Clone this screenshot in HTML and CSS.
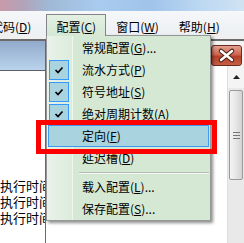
FILE: index.html
```html
<!DOCTYPE html>
<html lang="zh-CN">
<head>
    <meta charset="UTF-8">
    <meta name="viewport" content="width=device-width, initial-scale=1.0">
    <title>配置菜单</title>
    <link rel="stylesheet" href="styles.css">
</head>
<body>
    <div class="screen">
        <div class="titlebar"></div>

        <div class="menubar">
            <span class="menu-item first">代码(<u>D</u>)</span>
            <span class="menu-item open">配置(<u>C</u>)</span>
            <span class="menu-item">窗口(<u>W</u>)</span>
            <span class="menu-item">帮助(<u>H</u>)</span>
        </div>

        <div class="workspace">
            <div class="left-pane">
                <div class="pane-head"></div>
                <div class="pane-body">
                    <div class="log-line">执行时间：12 ms</div>
                    <div class="log-line">执行时间：15 ms</div>
                    <div class="log-line">执行时间：11 ms</div>
                </div>
            </div>

            <div class="child">
                <div class="child-head">
                    <div class="close-btn">
                        <svg width="29" height="19" viewBox="0 0 29 19">
                            <path d="M9 5 L20 14 M20 5 L9 14" stroke="#4a2418" stroke-width="4.5" stroke-linecap="round"/>
                            <path d="M9 5 L20 14 M20 5 L9 14" stroke="#fff" stroke-width="2.4" stroke-linecap="round"/>
                        </svg>
                    </div>
                </div>
                <div class="child-body">
                    <div class="doc"></div>
                    <div class="scrollbar">
                        <div class="scroll-up">
                            <svg width="7" height="4" viewBox="0 0 7 4"><path d="M0 4 L3.5 0 L7 4 Z" fill="#222"/></svg>
                        </div>
                        <div class="scroll-thumb">
                            <svg width="7" height="7" viewBox="0 0 7 7">
                                <path d="M0 0.5 H7 M0 3.5 H7 M0 6.5 H7" stroke="#777" stroke-width="1"/>
                            </svg>
                        </div>
                    </div>
                </div>
            </div>
        </div>

        <!-- open "配置" menu -->
        <div class="dropdown">
            <div class="item"><span class="check"></span><span class="label">常规配置(<u>G</u>)...</span></div>
            <div class="item"><span class="check on"></span><span class="label">流水方式(<u>P</u>)</span></div>
            <div class="item"><span class="check on"></span><span class="label">符号地址(<u>S</u>)</span></div>
            <div class="item"><span class="check on"></span><span class="label">绝对周期计数(<u>A</u>)</span></div>
            <div class="item hover"><span class="check"></span><span class="label">定向(<u>F</u>)</span></div>
            <div class="item"><span class="check"></span><span class="label">延迟槽(<u>D</u>)</span></div>
            <div class="sep"></div>
            <div class="item"><span class="check"></span><span class="label">载入配置(<u>L</u>)...</span></div>
            <div class="item"><span class="check"></span><span class="label">保存配置(<u>S</u>)...</span></div>
        </div>

        <div class="callout"></div>
    </div>
</body>
</html>
```

FILE: styles.css
```css
body {
    margin: 0;
    font-family: "Noto Sans CJK SC", "Noto Sans", sans-serif;
    font-size: 12px;
    color: #000;
    background-color: #fff;
}

.screen {
    position: relative;
    width: 244px;
    height: 243px;
    overflow: hidden;
}

.titlebar {
    height: 11px;
    background: linear-gradient(90deg, #c99aaa 0%, #b3a2b8 9%, #9fb9d6 20%, #a9cbee 40%, #a0c4ea 62%, #bcd8f2 82%, #cfe3f3 100%);
}

.menubar {
    display: flex;
    align-items: flex-start;
    height: 24px;
    padding-top: 3px;
    box-sizing: border-box;
    background: linear-gradient(#f5f7f9, #edf0f3);
}

.menu-item {
    flex-shrink: 0;
    height: 22px;
    padding: 2px 9px 0;
    line-height: 19px;
    border: 1px solid transparent;
    border-bottom: none;
    box-sizing: border-box;
    white-space: nowrap;
}

.menu-item.first {
    margin-left: -19px;
    padding-right: 14px;
}

.menu-item.open {
    position: relative;
    z-index: 2;
    border-color: #858585;
    background: linear-gradient(#e3f0e3, #d5e8d4);
}

.workspace {
    display: flex;
    height: 208px;
    padding-top: 4px;
    box-sizing: border-box;
    background-color: #f0f0f0;
}

.left-pane {
    display: flex;
    flex-direction: column;
    width: 46px;
    border-top: 2px solid #6b6b6b;
    border-right: 1px solid #6b6b6b;
    box-sizing: border-box;
}

.pane-head {
    flex-shrink: 0;
    height: 29px;
    background: linear-gradient(#92aacb, #bad3ec);
    border-bottom: 1px solid #5f5f5f;
}

.pane-body {
    flex: 1;
    padding-top: 107px;
    background-color: #fff;
    overflow: hidden;
}

.log-line {
    font-size: 13px;
    line-height: 16px;
    white-space: nowrap;
}

.child {
    flex: 1;
    display: flex;
    flex-direction: column;
    border-top: 2px solid #6b6b6b;
}

.child-head {
    flex-shrink: 0;
    display: flex;
    justify-content: flex-end;
    align-items: flex-end;
    height: 25px;
    padding-right: 2px;
    background-color: #f3f3f3;
}

.close-btn {
    width: 31px;
    height: 21px;
    box-sizing: border-box;
    border: 1px solid #6d2b20;
    border-radius: 3px;
    background: linear-gradient(#e3a090, #cd6650 45%, #b8402a 55%, #c45e44);
}

.close-btn svg {
    display: block;
}

.child-body {
    flex: 1;
    display: flex;
}

.doc {
    flex: 1;
    background-color: #fff;
}

.scrollbar {
    display: flex;
    flex-direction: column;
    width: 17px;
    box-sizing: border-box;
    border-left: 1px solid #dedede;
    background-color: #e9e9e9;
}

.scroll-up {
    display: flex;
    justify-content: center;
    align-items: center;
    height: 22px;
    background-color: #f4f4f4;
}

.scroll-thumb {
    display: flex;
    justify-content: center;
    align-items: center;
    height: 88px;
    margin: 2px 1px 0;
    border: 1px solid #9a9a9a;
    border-radius: 2px;
    background: linear-gradient(90deg, #f4f4f4, #e6e6e6 50%, #d3d3d3);
}

.dropdown {
    position: absolute;
    z-index: 1;
    left: 46px;
    top: 35px;
    width: 165px;
    padding-top: 1px;
    box-sizing: border-box;
    border: 1px solid #979797;
    background: linear-gradient(90deg, #eaf2ea 0, #dcecdb 25px, #eef6ee 25px, #eef6ee 26px, #d5e8d4 26px);
    box-shadow: 2px 2px 3px rgba(0, 0, 0, 0.45);
}

.item {
    display: flex;
    align-items: center;
    height: 22px;
    margin: 0 1px;
    border: 1px solid transparent;
    box-sizing: border-box;
    white-space: nowrap;
}

.item.hover {
    background-color: #a8d3df;
    border-color: #3d9af0;
}

.check {
    width: 20px;
    height: 20px;
    box-sizing: border-box;
}

.check.on {
    border: 1px solid #3399ff;
    background-color: #a8d3df;
    background-image: url("data:image/svg+xml;utf8,<svg xmlns='http://www.w3.org/2000/svg' width='18' height='18'><path d='M5.5 9 L8 11.5 L12.5 6.5' fill='none' stroke='black' stroke-width='1.7'/></svg>");
}

.label {
    margin-left: 13px;
    line-height: 20px;
}

.sep {
    height: 7px;
    margin: 0 1px 0 32px;
    background: linear-gradient(transparent 3px, #b3bdb3 3px, #b3bdb3 4px, #f3f9f3 4px, #f3f9f3 5px, transparent 5px);
}

.callout {
    position: absolute;
    z-index: 3;
    left: 36px;
    top: 120px;
    width: 181px;
    height: 34px;
    box-sizing: border-box;
    border: 5px solid #ff0000;
}
```
